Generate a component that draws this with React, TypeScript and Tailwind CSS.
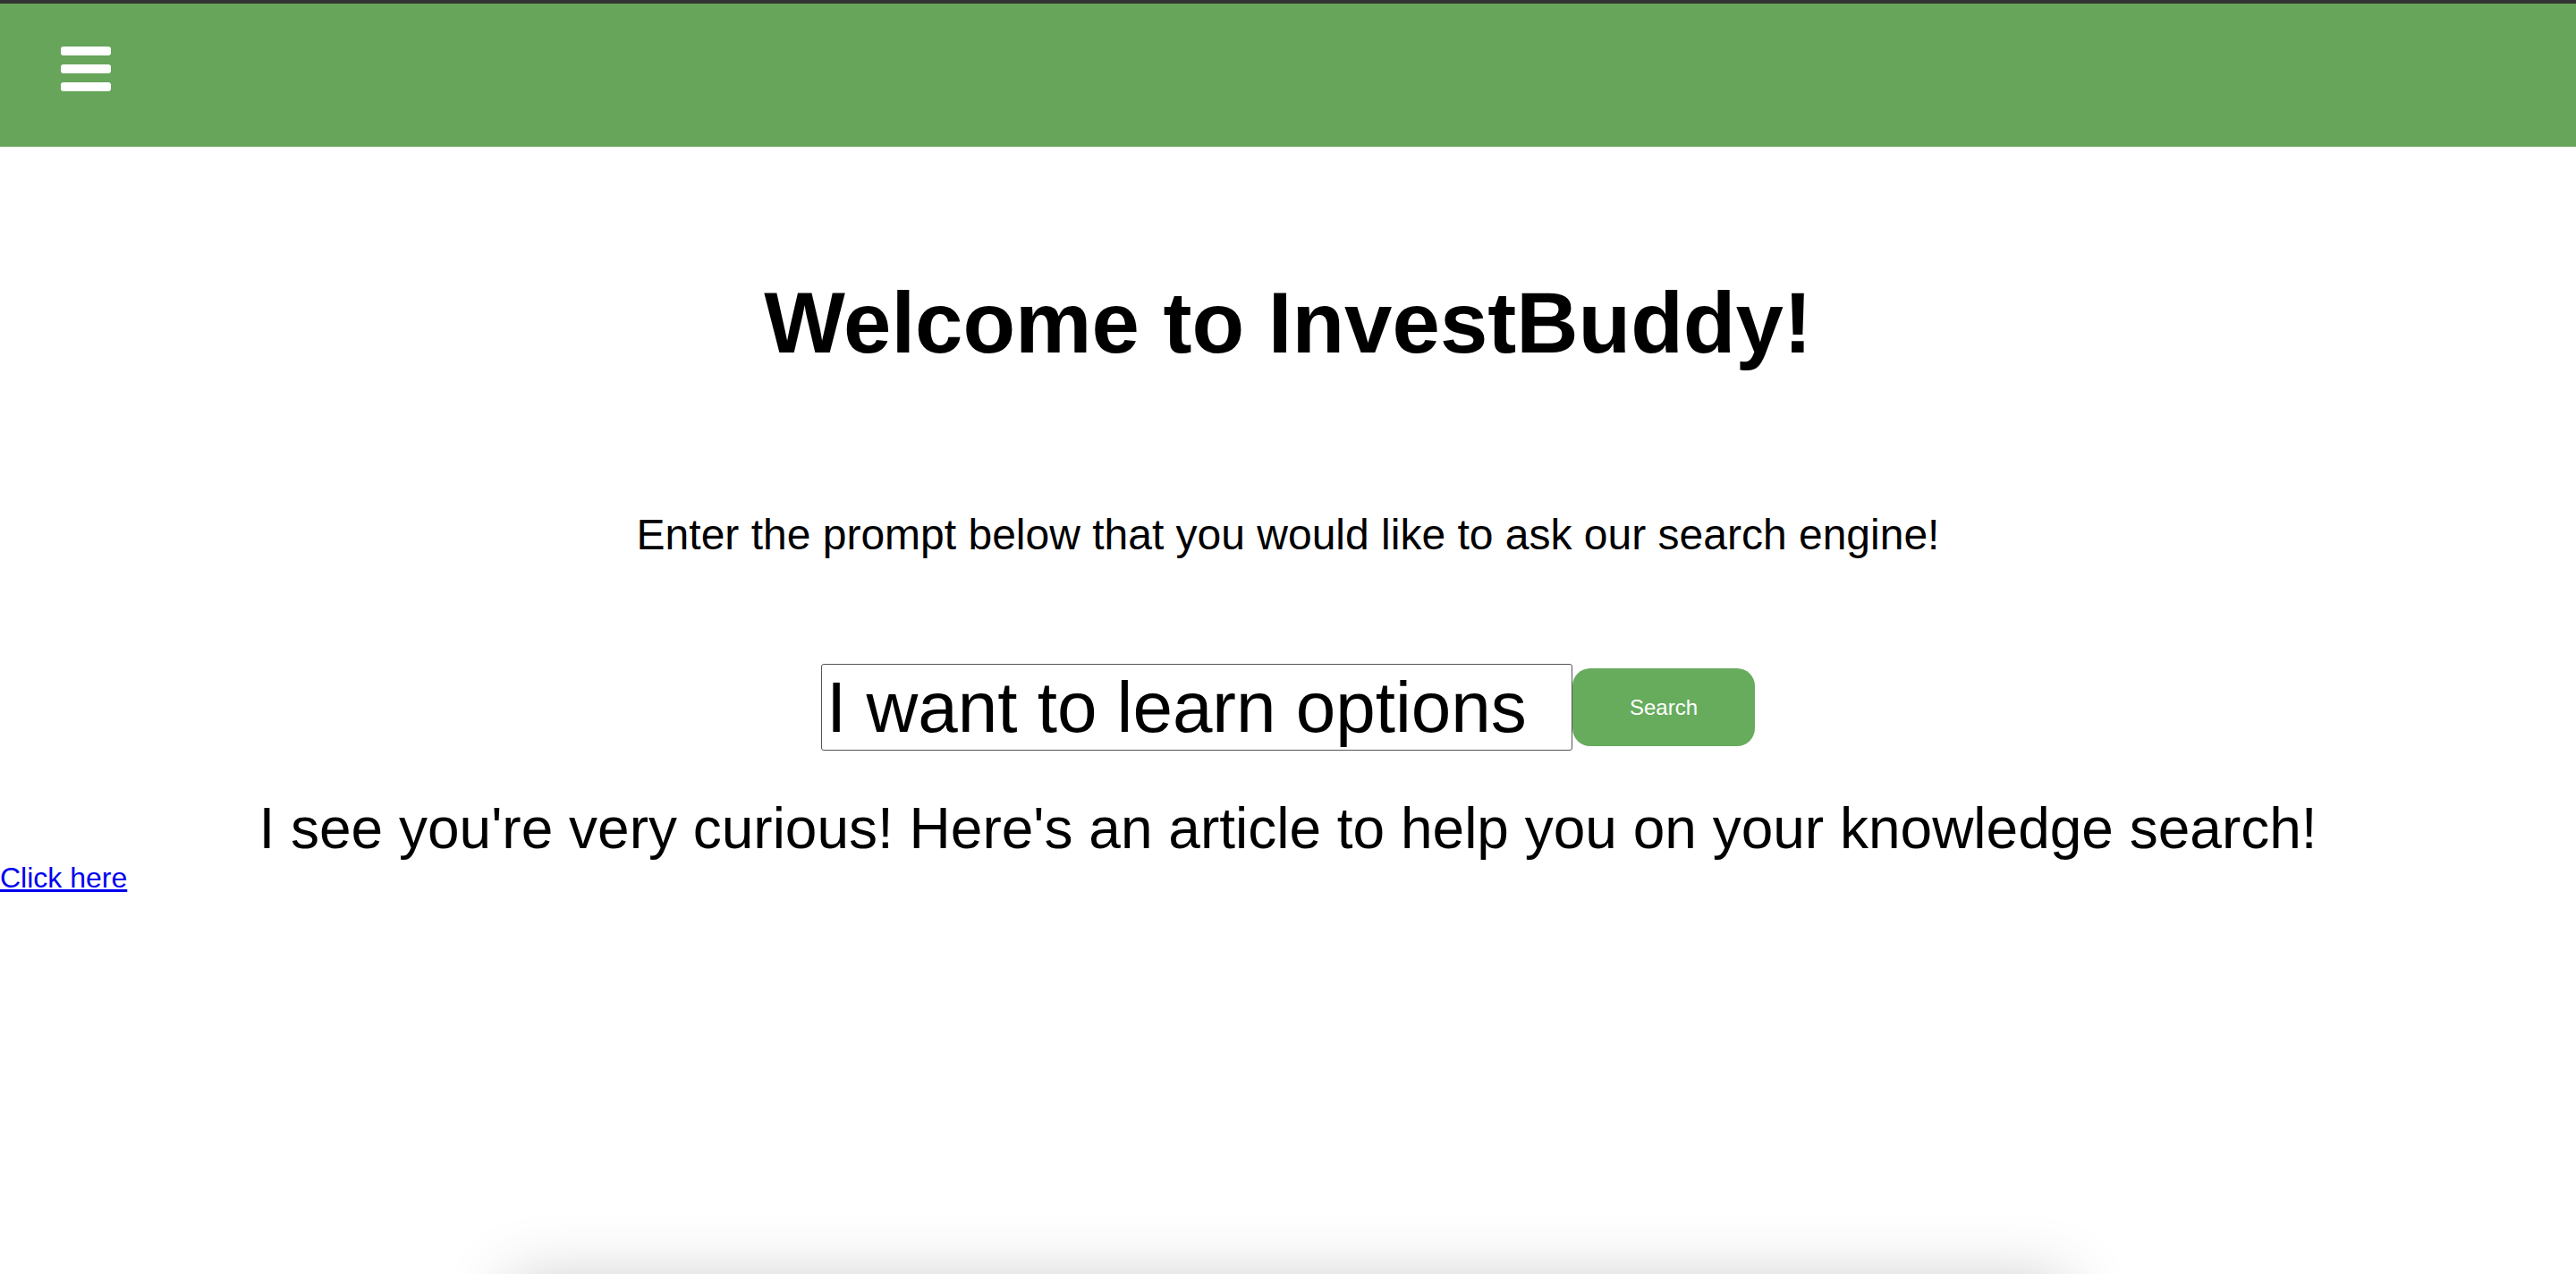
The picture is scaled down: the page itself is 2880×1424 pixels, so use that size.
import { useState } from 'react';

export default function App() {
  const [query, setQuery] = useState('I want to learn options');

  return (
    <div
      className="h-[1424px] overflow-hidden bg-white text-black"
      style={{ fontFamily: '"Liberation Sans", Arial, sans-serif' }}
    >
      <div className="h-[4px] bg-[#333333]" />
      <header className="h-[160px] bg-[#66a55a] flex px-[68px] pt-[48px]">
        <button className="flex flex-col gap-[10px] w-[56px] h-[50px]" aria-label="Menu">
          <span className="block h-[10px] w-[56px] rounded-[3px] bg-white" />
          <span className="block h-[10px] w-[56px] rounded-[3px] bg-white" />
          <span className="block h-[10px] w-[56px] rounded-[3px] bg-white" />
        </button>
      </header>

      <h1 className="mt-[149px] text-center text-[96px] font-bold leading-none">
        Welcome to InvestBuddy!
      </h1>

      <p className="mt-[165px] text-center text-[48px] leading-none">
        Enter the prompt below that you would like to ask our search engine!
      </p>

      <div className="mt-[120px] flex items-center justify-center">
        <input
          value={query}
          onChange={(e) => setQuery(e.target.value)}
          className="w-[840px] h-[97px] border-[1.5px] border-[#555555] rounded-[3px] px-[5px] text-[80px] leading-none text-black outline-none"
        />
        <button className="w-[204px] h-[87px] rounded-[20px] bg-[#67ac5d] text-white text-[24px] leading-none">
          Search
        </button>
      </div>

      <p className="mt-[55px] text-center text-[64px] leading-none">
        I see you're very curious! Here's an article to help you on your knowledge search!
      </p>

      <div className="mt-[7px] text-[32px] leading-none">
        <a href="#" className="text-[#0000ee] underline">
          Click here
        </a>
      </div>

      <div className="mt-[436px] mx-auto w-[1740px] h-[400px] bg-white shadow-[0_0_70px_rgba(0,0,0,0.22)]" />
    </div>
  );
}
